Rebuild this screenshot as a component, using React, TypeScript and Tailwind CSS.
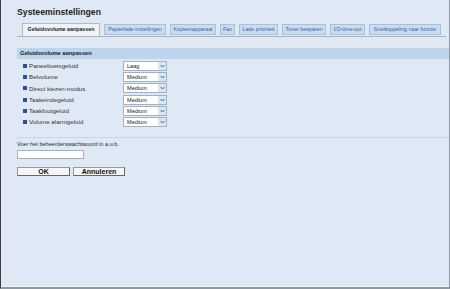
import React from "react";

// tabnaam + breedte zoals in het origineel
const TABS: [string, string][] = [
  ["Geluidsvolume aanpassen", "w-[78px]"],
  ["Papierlade-instellingen", "w-[62px]"],
  ["Kopieerapparaat", "w-[46px]"],
  ["Fax", "w-[15px]"],
  ["Lade prioriteit", "w-[39px]"],
  ["Toner besparen", "w-[44px]"],
  ["I/O-time-out", "w-[35px]"],
  ["Snelkoppeling naar functie", "w-[72px]"],
];

const ROWS: [string, string][] = [
  ["Paneeltoetsgeluid", "Laag"],
  ["Belvolume", "Medium"],
  ["Direct kiezen-modus", "Medium"],
  ["Taakeindegeluid", "Medium"],
  ["Taakfoutgeluid", "Medium"],
  ["Volume alarmgeluid", "Medium"],
];

// nagebootste select met pijltje rechts
function FakeSelect({ value }: { value: string }) {
  return (
    <div className="flex h-[10px] w-[44px] items-stretch border border-[#9fb1c6] bg-white">
      <span className="flex-1 pl-[3px] text-[5.6px] leading-[8px] text-[#222]">{value}</span>
      <span className="flex w-[8px] items-center justify-center bg-[#d9e6f4]">
        <svg width="5" height="4" viewBox="0 0 5 4">
          <path d="M0.6 1 L2.5 3 L4.4 1" fill="none" stroke="#3b5f9e" strokeWidth="1" />
        </svg>
      </span>
    </div>
  );
}

export default function App() {
  return (
    <div
      className="flex h-[289px] w-[450px] flex-col border-b-2 border-l border-r border-b-[#8d97a1] border-l-[#3c3c3c] border-r-[#8e99a6] bg-[#dfe9f5] shadow-[inset_0_-1px_0_#f3f7fb]"
      style={{ fontFamily: '"Liberation Sans", Arial, sans-serif' }}
    >
      <h1 className="pl-[16px] pt-[7px] text-[8.7px] font-bold leading-[10px] text-[#1e1e1e]">
        Systeeminstellingen
      </h1>

      <div className="ml-[16px] mr-[3px] mt-[6px] flex items-end gap-[4px] border-b border-[#a9b3bd] pl-[5px]">
        {TABS.map(([t, w], i) =>
          i === 0 ? (
            <div
              key={t}
              className={`${w} flex h-[13px] shrink-0 items-center justify-center whitespace-nowrap border border-b-0 border-[#b3bac3] bg-[#eef3f8] text-[5.3px] font-bold leading-none text-[#222]`}
            >
              {t}
            </div>
          ) : (
            <div
              key={t}
              className={`${w} mb-[1px] flex h-[11px] shrink-0 items-center justify-center whitespace-nowrap border border-[#a9c0d8] bg-[#c9dcf0] text-[5.3px] leading-none text-[#3461ad]`}
            >
              {t}
            </div>
          ),
        )}
      </div>

      <div className="ml-[16px] mt-[11px] flex h-[11px] items-center bg-[#bcd5ed] pl-[3px] text-[5.7px] font-bold text-[#1a1a1a]">
        Geluidsvolume aanpassen
      </div>

      <div className="flex flex-col pl-[22px] pt-[1px]">
        {ROWS.map(([label, value]) => (
          <div key={label} className="flex h-[11.3px] items-center">
            <div className="flex w-[100px] items-center gap-[2px]">
              <span className="h-[4px] w-[4px] bg-[#2b4f98]" />
              <span className="text-[6.2px] text-[#333]">{label}</span>
            </div>
            <FakeSelect value={value} />
          </div>
        ))}
      </div>

      <div className="ml-[16px] mt-[9px] h-px bg-[#c5d6e8]" />

      <div className="flex flex-col items-start pl-[16px]">
        <p className="mt-[3px] text-[5.6px] leading-[7px] text-[#2a2a2a]">
          Voer het beheerderswachtwoord in a.u.b.
        </p>
        <div className="mt-[2px] h-[9px] w-[67px] border border-[#9fb1c6] bg-white" />
        <div className="mt-[8px] flex gap-[3px]">
          <button className="flex h-[9px] w-[53px] items-center justify-center border border-[#9a9a9a] border-b-[#666] border-r-[#666] bg-[#f6f6f6] text-[7px] font-bold leading-none text-[#111]">
            OK
          </button>
          <button className="flex h-[9px] w-[52px] items-center justify-center border border-[#9a9a9a] border-b-[#666] border-r-[#666] bg-[#f6f6f6] text-[7px] font-bold leading-none text-[#111]">
            Annuleren
          </button>
        </div>
      </div>
    </div>
  );
}
